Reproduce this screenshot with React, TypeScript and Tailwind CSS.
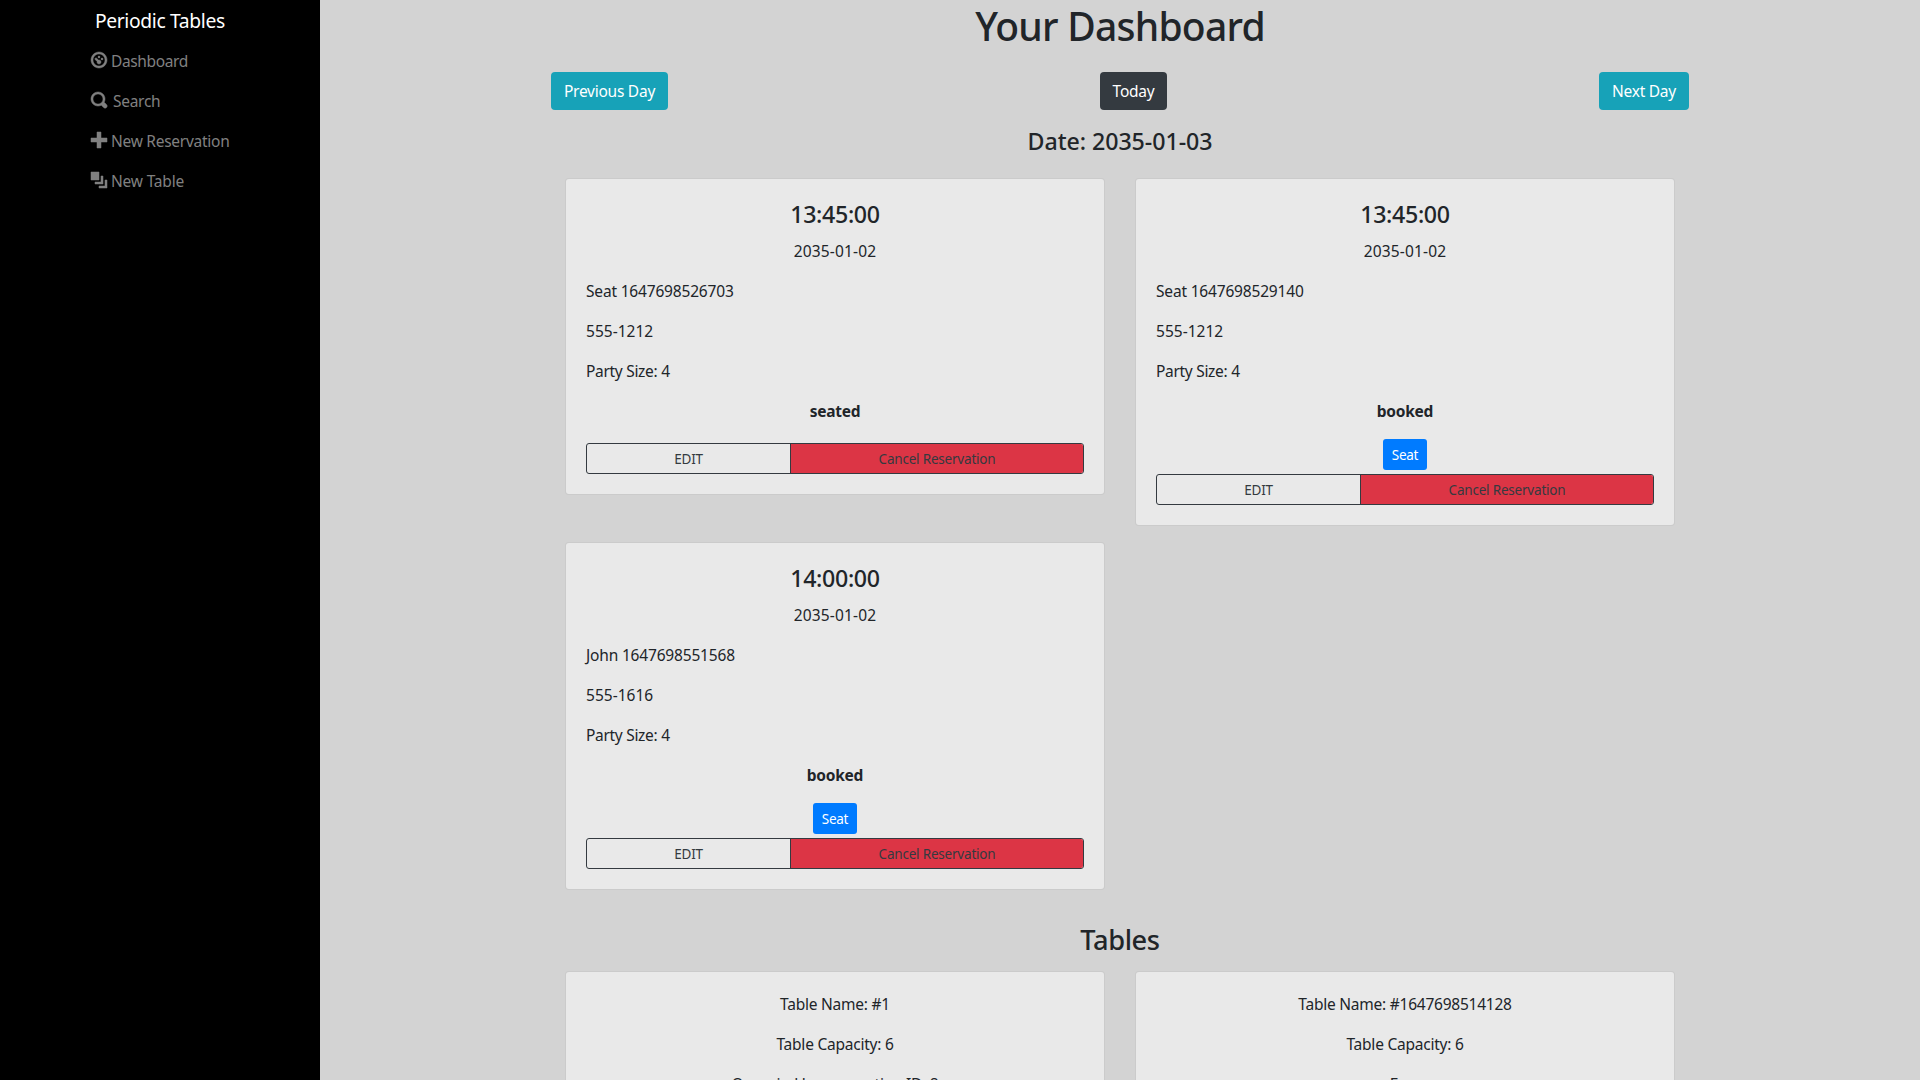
import type { ReactNode } from "react";

type Reservation = {
  time: string;
  date: string;
  name: string;
  phone: string;
  size: number;
  status: "seated" | "booked";
};

const reservations: Reservation[] = [
  { time: "13:45:00", date: "2035-01-02", name: "Seat 1647698526703", phone: "555-1212", size: 4, status: "seated" },
  { time: "13:45:00", date: "2035-01-02", name: "Seat 1647698529140", phone: "555-1212", size: 4, status: "booked" },
  { time: "14:00:00", date: "2035-01-02", name: "John 1647698551568", phone: "555-1616", size: 4, status: "booked" },
];

const tables = [
  { name: "#1", capacity: 6, status: "Occupied by reservation ID: 8" },
  { name: "#1647698514128", capacity: 6, status: "Free" },
];

const icons = {
  dashboard:
    "M4 0c-2.2 0-4 1.8-4 4s1.8 4 4 4 4-1.8 4-4-1.8-4-4-4zm0 1c1.66 0 3 1.34 3 3s-1.34 3-3 3-3-1.34-3-3 1.34-3 3-3zm0 1c-.28 0-.5.22-.5.5s.22.5.5.5.5-.22.5-.5-.22-.5-.5-.5zm-1.66 1a.5.5 0 0 0-.19.84l.91.91c-.02.08-.06.16-.06.25 0 .55.45 1 1 1s1-.45 1-1-.45-1-1-1c-.09 0-.17.04-.25.06l-.91-.91a.5.5 0 0 0-.44-.16.5.5 0 0 0-.06 0zm3.16 0c-.28 0-.5.22-.5.5s.22.5.5.5.5-.22.5-.5-.22-.5-.5-.5z",
  search:
    "M3.5 0c-1.93 0-3.5 1.57-3.5 3.5s1.57 3.5 3.5 3.5c.59 0 1.17-.14 1.66-.41a1 1 0 0 0 .13.13l1 1a1.02 1.02 0 1 0 1.44-1.44l-1-1a1 1 0 0 0-.16-.13c.27-.49.44-1.06.44-1.66 0-1.93-1.55-3.5-3.5-3.5zm0 1c1.39 0 2.5 1.11 2.5 2.5 0 .66-.24 1.27-.66 1.72l-.03.03a1 1 0 0 0-.13.13c-.44.4-1.04.63-1.69.63-1.39 0-2.5-1.11-2.5-2.5s1.11-2.5 2.5-2.5z",
  plus: "M3 0v3h-3v2h3v3h2v-3h3v-2h-3v-3h-2z",
  layers: "M0 0v4h4v-4h-4zm5 2v3h-3v1h4v-4h-1zm2 2v3h-3v1h4v-4h-1z",
};

function NavItem({ icon, children }: { icon: string; children: ReactNode }) {
  return (
    <li>
      <a className="flex items-start py-2 leading-6 text-[#808080]">
        <svg viewBox="0 0 8 8" className="mt-[3px] size-4 shrink-0 overflow-visible fill-current stroke-current stroke-[0.25]">
          <path d={icon} />
        </svg>
        {children}
      </a>
    </li>
  );
}

function Sidebar() {
  return (
    <nav className="w-[320px] shrink-0 bg-black pl-[90.5px] pt-[5px]">
      <div className="pl-[4.4px] text-[19.3px] leading-[31px] tracking-[-0.35px] text-white">Periodic Tables</div>
      <ul className="mt-[5px]">
        <NavItem icon={icons.dashboard}>
          <span className="ml-[4.5px] tracking-[-0.38px]">Dashboard</span>
        </NavItem>
        <NavItem icon={icons.search}>
          <span className="ml-[6.5px] tracking-[-0.28px]">Search</span>
        </NavItem>
        <NavItem icon={icons.plus}>
          <span className="ml-[4.5px] tracking-[-0.27px]">New Reservation</span>
        </NavItem>
        <NavItem icon={icons.layers}>
          <span className="ml-[4.5px] tracking-[-0.2px]">New Table</span>
        </NavItem>
      </ul>
    </nav>
  );
}

function Card({ children }: { children: ReactNode }) {
  return (
    <article className="flex flex-col rounded border border-black/[0.125] bg-[#e9e9e9] p-5">{children}</article>
  );
}

function ReservationCard({ r }: { r: Reservation }) {
  return (
    <Card>
      <h4 className="mb-2.5 mt-px text-center text-[23.2px] font-medium leading-[29px] tracking-[-0.35px]">{r.time}</h4>
      <p className="mb-4 text-center leading-6 tracking-[0.15px]">{r.date}</p>
      <p className="mb-4 leading-6 tracking-[-0.18px]">{r.name}</p>
      <p className="mb-4 leading-6 tracking-[0.02px]">{r.phone}</p>
      <p className="mb-4 leading-6 tracking-[-0.3px]">Party Size: {r.size}</p>
      <p className="mb-4 text-center font-bold leading-6 tracking-[-0.25px]">{r.status}</p>
      {r.status === "booked" && (
        <button className="h-[31px] w-[44px] self-center rounded-[3px] bg-[#007bff] pt-px text-[13.5px] leading-[21px] tracking-[-0.25px] text-white">
          Seat
        </button>
      )}
      <div className="mt-1 flex h-[31px] overflow-hidden rounded-[3px] border border-[#343a40] text-[13.5px] leading-[21px] text-[#343a40]">
        <button className="w-[203px] pt-px tracking-[-0.25px]">EDIT</button>
        <button className="flex-1 border-l border-[#343a40] bg-[#dc3545] pt-px tracking-[-0.2px]">
          Cancel Reservation
        </button>
      </div>
    </Card>
  );
}

export default function App() {
  return (
    <div className="flex h-[1080px] w-[1920px] overflow-hidden bg-[#d3d3d3] font-['Noto_Sans','Open_Sans',sans-serif] text-[15.5px] text-[#212529]">
      <Sidebar />
      <main className="flex flex-1 flex-col items-center">
        <h1 className="text-[39px] font-medium leading-[52px] tracking-[-0.75px]">Your Dashboard</h1>
        <div className="mt-5 flex w-[1138px] justify-between tracking-[-0.25px] text-white">
          <button className="h-[38px] w-[117px] rounded bg-[#17a2b8] pt-0.5">Previous Day</button>
          <button className="h-[38px] w-[67px] rounded bg-[#343a40] pt-0.5">Today</button>
          <button className="h-[38px] w-[90px] rounded bg-[#17a2b8] pt-0.5">Next Day</button>
        </div>
        <h4 className="mt-4 text-[23.2px] font-medium leading-[31px] tracking-[-0.05px]">Date: 2035-01-03</h4>
        <section className="mt-[21px] grid w-[1110px] grid-cols-2 items-start gap-x-[30px] gap-y-4">
          {reservations.map((r) => (
            <ReservationCard key={r.name} r={r} />
          ))}
        </section>
        <h3 className="mt-8 text-[27.2px] font-medium leading-9 tracking-[-0.4px]">Tables</h3>
        <section className="mt-[13px] grid w-[1110px] grid-cols-2 gap-x-[30px]">
          {tables.map((t) => (
            <Card key={t.name}>
              <div className="text-center leading-6 tracking-[-0.24px]">
                <p className="mb-4">Table Name: {t.name}</p>
                <p className="mb-4">Table Capacity: {t.capacity}</p>
                <p className="mb-4">{t.status}</p>
              </div>
            </Card>
          ))}
        </section>
      </main>
    </div>
  );
}
